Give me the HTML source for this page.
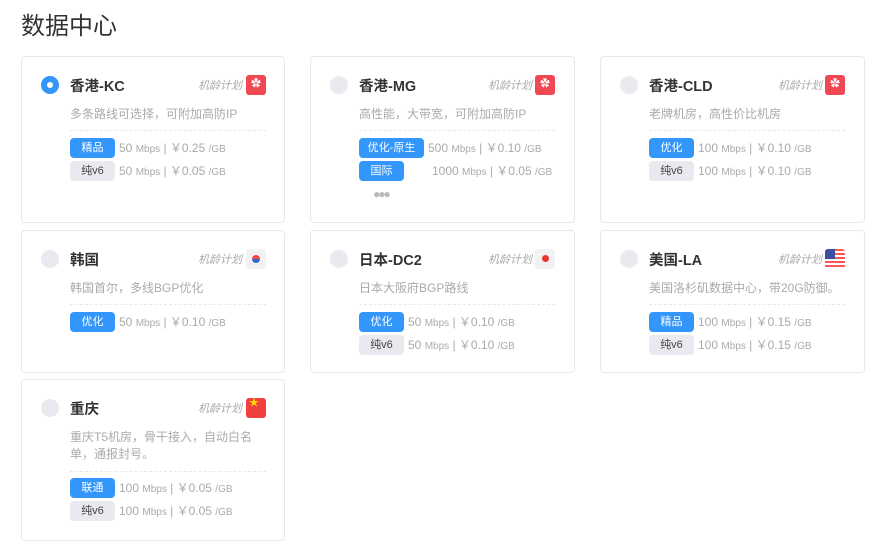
<!DOCTYPE html><html><head><meta charset="utf-8"><style>
body{margin:0;width:884px;height:547px;background:#fff;font-family:"Liberation Sans","Noto Sans CJK SC",sans-serif;position:relative;overflow:hidden}
h1{position:absolute;left:21px;top:6px;margin:0;font-size:24px;font-weight:normal;color:#333}
.c{position:absolute;border:1px solid #e6e8ee;border-radius:4px;box-sizing:border-box}
.r{position:absolute;left:19px;top:19px;width:18px;height:18px;border-radius:50%;background:#e9eaf0}
.r.on{background:#3296fa}.r.on:after{content:"";position:absolute;left:6px;top:6px;width:6px;height:6px;border-radius:50%;background:#fff}
.t{position:absolute;left:48px;top:18px;font-size:14.5px;font-weight:bold;color:#333}
.p{position:absolute;right:42px;top:20px;font-size:11px;font-style:italic;color:#aaa}
.f{position:absolute;left:224px;top:18px;width:20px;height:20px;border-radius:3px;background:#f04852;color:#fff;font-size:10px;text-align:center;line-height:20px;overflow:hidden}
.d{position:absolute;left:48px;top:49px;width:196px;font-size:12px;color:#aaa;line-height:17px}
.l{position:absolute;left:48px;width:196px;border-top:1px dashed #e6e8ee}
.row{position:absolute;left:48px;font-size:12px;color:#aaa;height:20px;line-height:20px;white-space:nowrap}
.b{display:inline-block;min-width:45px;padding:0 8px;box-sizing:border-box;height:20px;border-radius:4px;background:#3296fa;color:#fff;font-size:11px;text-align:center;margin-right:4px;vertical-align:top}
.b.g{background:#e9eaf0;color:#444}
small{font-size:10px}
</style></head><body>
<h1>数据中心</h1>

<div class="c" style="left:21px;top:56px;width:264px;height:167px">
<div class="r on"></div><div class="t">香港-KC</div><div class="p">机龄计划</div><div class="f">✿</div>
<div class="d">多条路线可选择，可附加高防IP</div><div class="l" style="top:73px"></div>
<div class="row" style="top:81px"><span class="b">精品</span>50 <small>Mbps</small> | ￥0.25 <small>/GB</small></div>
<div class="row" style="top:104px"><span class="b g">纯v6</span>50 <small>Mbps</small> | ￥0.05 <small>/GB</small></div>
</div>

<div class="c" style="left:310px;top:56px;width:265px;height:167px">
<div class="r"></div><div class="t">香港-MG</div><div class="p">机龄计划</div><div class="f">✿</div>
<div class="d">高性能，大带宽，可附加高防IP</div><div class="l" style="top:73px"></div>
<div class="row" style="top:81px"><span class="b" style="width:65px">优化-原生</span>500 <small>Mbps</small> | ￥0.10 <small>/GB</small></div>
<div class="row" style="top:104px"><span class="b" style="margin-right:28px">国际</span>1000 <small>Mbps</small> | ￥0.05 <small>/GB</small></div>
<div class="row" style="top:127px;left:62px;font-size:12px;color:#bbb;letter-spacing:-2px">●●●</div>
</div>

<div class="c" style="left:600px;top:56px;width:265px;height:167px">
<div class="r"></div><div class="t">香港-CLD</div><div class="p">机龄计划</div><div class="f">✿</div>
<div class="d">老牌机房，高性价比机房</div><div class="l" style="top:73px"></div>
<div class="row" style="top:81px"><span class="b">优化</span>100 <small>Mbps</small> | ￥0.10 <small>/GB</small></div>
<div class="row" style="top:104px"><span class="b g">纯v6</span>100 <small>Mbps</small> | ￥0.10 <small>/GB</small></div>
</div>

<div class="c" style="left:21px;top:230px;width:264px;height:143px">
<div class="r"></div><div class="t">韩国</div><div class="p">机龄计划</div><div class="f" style="background:#f2f2f4"><span style="display:inline-block;width:8px;height:8px;border-radius:50%;background:linear-gradient(#e44 50%,#36c 50%);margin-top:6px"></span></div>
<div class="d">韩国首尔，多线BGP优化</div><div class="l" style="top:73px"></div>
<div class="row" style="top:81px"><span class="b">优化</span>50 <small>Mbps</small> | ￥0.10 <small>/GB</small></div>
</div>

<div class="c" style="left:310px;top:230px;width:265px;height:143px">
<div class="r"></div><div class="t">日本-DC2</div><div class="p">机龄计划</div><div class="f" style="background:#f2f2f4"><span style="display:inline-block;width:7px;height:7px;border-radius:50%;background:#e33;margin-top:6px"></span></div>
<div class="d">日本大阪府BGP路线</div><div class="l" style="top:73px"></div>
<div class="row" style="top:81px"><span class="b">优化</span>50 <small>Mbps</small> | ￥0.10 <small>/GB</small></div>
<div class="row" style="top:104px"><span class="b g">纯v6</span>50 <small>Mbps</small> | ￥0.10 <small>/GB</small></div>
</div>

<div class="c" style="left:600px;top:230px;width:265px;height:143px">
<div class="r"></div><div class="t">美国-LA</div><div class="p">机龄计划</div><div class="f" style="background:repeating-linear-gradient(#f55 0 2px,#fff 2px 4px)"><span style="position:absolute;left:0;top:0;width:10px;height:10px;background:#3d4fa0"></span></div>
<div class="d">美国洛杉矶数据中心，带20G防御。</div><div class="l" style="top:73px"></div>
<div class="row" style="top:81px"><span class="b">精品</span>100 <small>Mbps</small> | ￥0.15 <small>/GB</small></div>
<div class="row" style="top:104px"><span class="b g">纯v6</span>100 <small>Mbps</small> | ￥0.15 <small>/GB</small></div>
</div>

<div class="c" style="left:21px;top:379px;width:264px;height:162px">
<div class="r"></div><div class="t">重庆</div><div class="p">机龄计划</div><div class="f" style="background:#f04040;color:#ffd400;text-align:left;padding-left:3px;box-sizing:border-box;line-height:12px">★</div>
<div class="d">重庆T5机房，骨干接入，自动白名单，通报封号。</div><div class="l" style="top:91px"></div>
<div class="row" style="top:98px"><span class="b">联通</span>100 <small>Mbps</small> | ￥0.05 <small>/GB</small></div>
<div class="row" style="top:121px"><span class="b g">纯v6</span>100 <small>Mbps</small> | ￥0.05 <small>/GB</small></div>
</div>
</body></html>
